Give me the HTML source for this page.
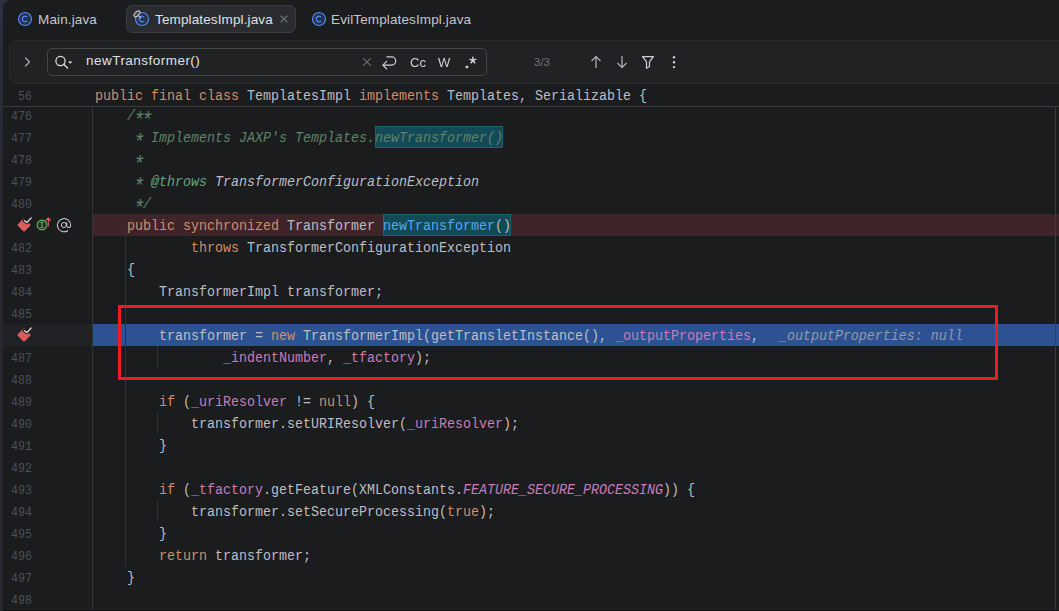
<!DOCTYPE html>
<html><head><meta charset="utf-8">
<style>
*{margin:0;padding:0;box-sizing:border-box}
html,body{width:1059px;height:611px;overflow:hidden;background:#1b1c1e}
body{position:relative;font-family:"Liberation Sans",sans-serif}
.abs{position:absolute}
svg{position:absolute;overflow:visible}
.tabtxt{position:absolute;top:11px;font-size:13.5px;line-height:18px;letter-spacing:0.13px;color:#c3c5cb;white-space:nowrap}
#activetab{position:absolute;left:126px;top:5px;width:170px;height:28px;border:1px solid #3a3c41;border-radius:6px;background:#2b2c30}
#searchpanel{position:absolute;left:9px;top:40px;width:1060px;height:44px;background:#212224;border:1px solid #2b2c2f;border-radius:8px 0 0 8px}
#input{position:absolute;left:47px;top:48px;width:440px;height:28px;border:1px solid #43454a;border-radius:5px}
.stxt{position:absolute;font-size:13.5px;line-height:18px;color:#dfe1e5;white-space:nowrap}
.wide{letter-spacing:0.47px}
.ln{position:absolute;left:0;width:32px;padding-top:2px;text-align:right;font-family:"Liberation Mono",monospace;font-size:12px;line-height:22px;color:#4b5059;transform:scale(0.97,1.12);transform-origin:100% 16px}
.cl{position:absolute;left:95px;padding-top:2px;font-family:"Liberation Mono",monospace;font-size:13.333px;color:#bcbec4;white-space:pre;line-height:22px;height:22px;transform:scaleY(1.1);transform-origin:0 16px}
.kw{color:#cf8e6d}
.fld{color:#c77dbb}
.sfld{color:#c77dbb;font-style:italic}
.mth{color:#56a8f5}
.doc{color:#5f826b;font-style:italic}
.dtag{color:#67a37c;font-style:italic}
.dref{color:#bcbec4;font-style:italic}
.ast{display:inline-block;transform:translate(-0.3px,5.2px) scale(1.45)}
.hint{color:#939aa8;font-style:italic;margin-left:20px}
.hl{position:absolute;height:22px;background:#124a57;border:1px solid #1b6272}
</style></head><body>
<!-- line backgrounds -->
<div class="abs" style="left:93px;top:214px;width:966px;height:22px;background:#3f2529"></div>
<div class="abs" style="left:3px;top:324px;width:89px;height:22px;background:#212225"></div>
<div class="abs" style="left:93px;top:324px;width:966px;height:22px;background:#2d5293"></div>
<!-- search highlights -->
<div class="hl" style="left:375px;top:126px;width:128px"></div>
<div class="hl" style="left:383px;top:214px;width:128px"></div>
<!-- guides -->
<div class="abs" style="left:92px;top:107px;width:1px;height:504px;background:#313438"></div>
<div class="abs" style="left:125px;top:236px;width:1px;height:330px;background:#2e3034"></div>
<div class="abs" style="left:157px;top:346px;width:1px;height:22px;background:#2e3034"></div>
<div class="abs" style="left:157px;top:412px;width:1px;height:22px;background:#2e3034"></div>
<div class="abs" style="left:157px;top:500px;width:1px;height:22px;background:#2e3034"></div>
<div class="abs" style="left:1055px;top:107px;width:1px;height:504px;background:#393b40"></div>
<div class="ln" style="top:104px">476</div>
<div class="cl" style="top:104px">    <span class="doc">/<span class="ast">*</span><span class="ast">*</span></span></div>
<div class="ln" style="top:126px">477</div>
<div class="cl" style="top:126px">    <span class="doc"> <span class="ast">*</span> Implements JAXP's Templates.newTransformer()</span></div>
<div class="ln" style="top:148px">478</div>
<div class="cl" style="top:148px">    <span class="doc"> <span class="ast">*</span></span></div>
<div class="ln" style="top:170px">479</div>
<div class="cl" style="top:170px">    <span class="doc"> <span class="ast">*</span> </span><span class="dtag">@throws</span><span class="doc"> </span><span class="dref">TransformerConfigurationException</span></div>
<div class="ln" style="top:192px">480</div>
<div class="cl" style="top:192px">    <span class="doc"> <span class="ast">*</span>/</span></div>
<div class="cl" style="top:214px">    <span class="kw">public synchronized</span> Transformer <span class="mth">newTransformer</span>()</div>
<div class="ln" style="top:236px">482</div>
<div class="cl" style="top:236px">            <span class="kw">throws</span> TransformerConfigurationException</div>
<div class="ln" style="top:258px">483</div>
<div class="cl" style="top:258px">    {</div>
<div class="ln" style="top:280px">484</div>
<div class="cl" style="top:280px">        TransformerImpl transformer;</div>
<div class="ln" style="top:302px">485</div>
<div class="cl" style="top:302px"></div>
<div class="cl" style="top:324px">        transformer = <span class="kw">new</span> TransformerImpl(getTransletInstance(), <span class="fld">_outputProperties</span>,<span class="hint">_outputProperties: null</span></div>
<div class="ln" style="top:346px">487</div>
<div class="cl" style="top:346px">                <span class="fld">_indentNumber</span>, <span class="fld">_tfactory</span>);</div>
<div class="ln" style="top:368px">488</div>
<div class="cl" style="top:368px"></div>
<div class="ln" style="top:390px">489</div>
<div class="cl" style="top:390px">        <span class="kw">if</span> (<span class="fld">_uriResolver</span> != <span class="kw">null</span>) {</div>
<div class="ln" style="top:412px">490</div>
<div class="cl" style="top:412px">            transformer.setURIResolver(<span class="fld">_uriResolver</span>);</div>
<div class="ln" style="top:434px">491</div>
<div class="cl" style="top:434px">        }</div>
<div class="ln" style="top:456px">492</div>
<div class="cl" style="top:456px"></div>
<div class="ln" style="top:478px">493</div>
<div class="cl" style="top:478px">        <span class="kw">if</span> (<span class="fld">_tfactory</span>.getFeature(XMLConstants.<span class="sfld">FEATURE_SECURE_PROCESSING</span>)) {</div>
<div class="ln" style="top:500px">494</div>
<div class="cl" style="top:500px">            transformer.setSecureProcessing(<span class="kw">true</span>);</div>
<div class="ln" style="top:522px">495</div>
<div class="cl" style="top:522px">        }</div>
<div class="ln" style="top:544px">496</div>
<div class="cl" style="top:544px">        <span class="kw">return</span> transformer;</div>
<div class="ln" style="top:566px">497</div>
<div class="cl" style="top:566px">    }</div>
<div class="ln" style="top:588px">498</div>
<div class="cl" style="top:588px"></div>
<!-- gutter icons -->
<svg style="left:24px;top:225px" width="1" height="1"><path d="M-6.2 -0.8 Q-7 0 -6.2 0.8 L-0.8 6.2 Q0 7 0.8 6.2 L6.2 0.8 Q7 0 6.2 -0.8 L0.8 -6.2 Q0 -7 -0.8 -6.2 Z" fill="#db5c5c"/>
      <path d="M0.3 -4.6 L2.8 -2.5 L7.4 -7.2" fill="none" stroke="#1b1c1e" stroke-width="3.4" stroke-linecap="round" stroke-linejoin="round"/>
      <path d="M0.5 -4.3 L2.8 -2.4 L7.1 -7" fill="none" stroke="#dfe1e5" stroke-width="1.3" stroke-linecap="round" stroke-linejoin="round"/></svg>
<svg style="left:24px;top:335px" width="1" height="1"><path d="M-6.2 -0.8 Q-7 0 -6.2 0.8 L-0.8 6.2 Q0 7 0.8 6.2 L6.2 0.8 Q7 0 6.2 -0.8 L0.8 -6.2 Q0 -7 -0.8 -6.2 Z" fill="#db5c5c"/>
      <path d="M0.3 -4.6 L2.8 -2.5 L7.4 -7.2" fill="none" stroke="#1b1c1e" stroke-width="3.4" stroke-linecap="round" stroke-linejoin="round"/>
      <path d="M0.5 -4.3 L2.8 -2.4 L7.1 -7" fill="none" stroke="#dfe1e5" stroke-width="1.3" stroke-linecap="round" stroke-linejoin="round"/></svg>
<svg style="left:42px;top:225px" width="1" height="1">
  <circle cx="0" cy="0" r="4.9" fill="#253627" stroke="#5fb865" stroke-width="1.1"/>
  <path d="M-1.6 -2.6 H1.6 M0 -2.6 V2.6 M-1.6 2.6 H1.6" stroke="#5fb865" stroke-width="0.9" fill="none"/>
  <path d="M6.3 0.8 V-7 M4.1 -4.7 L6.3 -7 L8.5 -4.7" stroke="#e55e5e" stroke-width="1.15" fill="none" stroke-linecap="round" stroke-linejoin="round"/>
</svg>
<svg style="left:64px;top:225px" width="1" height="1">
  <path d="M3.6 5.7 A6.6 6.6 0 1 1 6.6 0.4 C6.6 2.3 5.4 2.7 4.3 2.5 C3.1 2.3 2.7 1.4 2.7 0 V-2.6" fill="none" stroke="#ced0d6" stroke-width="1.05" stroke-linecap="round"/>
  <circle cx="-0.1" cy="0" r="2.5" fill="none" stroke="#ced0d6" stroke-width="1"/>
</svg>

<!-- sticky line -->
<div class="abs" style="left:0;top:84px;width:1059px;height:22px;background:#1b1c1e"></div>
<div class="abs" style="left:0;top:106px;width:1059px;height:1px;background:#393b40"></div>
<div class="ln" style="top:84px">56</div>
<div class="cl" style="top:84px"><span class="kw">public final class</span> TemplatesImpl <span class="kw">implements</span> Templates, Serializable {</div>

<!-- tabs -->
<div class="abs" style="left:0;top:0;width:1059px;height:40px;background:#1b1c1e"></div>
<div id="activetab"></div>
<svg style="left:25px;top:19px" width="1" height="1"><circle cx="0" cy="0" r="6.5" fill="#25324d" stroke="#548af7" stroke-width="1.15"/>
      <path d="M2.2 -1.8 A2.8 2.8 0 1 0 2.2 1.8" fill="none" stroke="#548af7" stroke-width="1.15"/></svg>
<svg style="left:142px;top:19px" width="1" height="1"><circle cx="0" cy="0" r="6.5" fill="#25324d" stroke="#548af7" stroke-width="1.15"/>
      <path d="M2.2 -1.8 A2.8 2.8 0 1 0 2.2 1.8" fill="none" stroke="#548af7" stroke-width="1.15"/>
  <path d="M-3.2 -3 L-1.2 -1" stroke="#b9bbc0" stroke-width="1.1" stroke-linecap="round"/>
  <ellipse cx="-5" cy="-5.2" rx="3.7" ry="2" transform="rotate(-45 -5 -5.2)" fill="#46484c" stroke="#d6d8dc" stroke-width="1"/>
</svg>
<svg style="left:319px;top:19px" width="1" height="1"><circle cx="0" cy="0" r="6.5" fill="#25324d" stroke="#548af7" stroke-width="1.15"/>
      <path d="M2.2 -1.8 A2.8 2.8 0 1 0 2.2 1.8" fill="none" stroke="#548af7" stroke-width="1.15"/></svg>
<span class="tabtxt" style="left:38px">Main.java</span>
<span class="tabtxt" style="left:155px;color:#dfe1e5">TemplatesImpl.java</span>
<span class="tabtxt" style="left:331px">EvilTemplatesImpl.java</span>
<svg style="left:284px;top:19px" width="1" height="1"><path d="M-3.4 -3.4 L3.4 3.4 M3.4 -3.4 L-3.4 3.4" stroke="#74777d" stroke-width="1.05"/></svg>

<!-- search bar -->
<div id="searchpanel"></div>
<div id="input"></div>
<svg style="left:0;top:0" width="1" height="1">
  <path d="M25.5 58 L29.5 62 L25.5 66" fill="none" stroke="#a8abb0" stroke-width="1.2" stroke-linecap="round" stroke-linejoin="round"/>
  <circle cx="60.5" cy="61" r="4.6" fill="none" stroke="#dfe1e5" stroke-width="1.2"/>
  <path d="M63.8 64.3 L67.5 68" stroke="#dfe1e5" stroke-width="1.3" stroke-linecap="round"/>
  <path d="M68 61.5 H72.4 L70.2 63.8 Z" fill="#dfe1e5"/>
  <path d="M363.3 58.3 L370.7 65.7 M370.7 58.3 L363.3 65.7" stroke="#6f737a" stroke-width="1.1"/>
  <path d="M386.4 56.9 H391.6 A4.1 4.1 0 0 1 391.6 65.1 H383.6" fill="none" stroke="#ced0d6" stroke-width="1.25"/>
  <path d="M386.6 61.4 L382.9 65.1 L386.6 68.8" fill="none" stroke="#ced0d6" stroke-width="1.25" stroke-linecap="round" stroke-linejoin="round"/>
  <path d="M596 56.5 V68 M591.5 61 L596 56.5 L600.5 61" fill="none" stroke="#a9acb2" stroke-width="1.3" stroke-linejoin="round"/>
  <path d="M622 56 V67.5 M617.5 63 L622 67.5 L626.5 63" fill="none" stroke="#a9acb2" stroke-width="1.3" stroke-linejoin="round"/>
  <path d="M642.6 56.6 H653.4 L649.5 61.8 V66.5 L646.5 68.2 V61.8 Z" fill="none" stroke="#ced0d6" stroke-width="1.2" stroke-linejoin="round"/>
  <circle cx="674" cy="57.3" r="1.2" fill="#ced0d6"/>
  <circle cx="674" cy="62.2" r="1.2" fill="#ced0d6"/>
  <circle cx="674" cy="67.1" r="1.2" fill="#ced0d6"/>
</svg>
<div class="stxt wide" style="left:86px;top:52px">newTransformer()</div>
<div class="stxt" style="left:410px;top:54px;font-size:13px;color:#ced0d6;will-change:transform">Cc</div>
<div class="stxt" style="left:438px;top:54px;font-size:13px;color:#ced0d6;will-change:transform">W</div>
<svg style="left:0;top:0" width="1" height="1">
  <rect x="465.7" y="65.7" width="2.5" height="2.5" rx="0.6" fill="#ced0d6"/>
  <path d="M472.9 60.3 V57.2 M472.9 60.3 L470 59.4 M472.9 60.3 L475.8 59.4 M472.9 60.3 L471.1 62.8 M472.9 60.3 L474.7 62.8" stroke="#ced0d6" stroke-width="1.5" stroke-linecap="round"/>
</svg>
<div class="stxt" style="left:534px;top:55px;font-size:11.5px;line-height:14px;color:#6f737a">3/3</div>

<!-- red box -->
<div class="abs" style="left:118px;top:305px;width:880px;height:75px;border:3px solid #ed1c24"></div>

<!-- left strip -->
<div class="abs" style="left:0;top:609px;width:1059px;height:1px;background:#232427"></div>
<div class="abs" style="left:0;top:610px;width:1059px;height:1px;background:#0c0c0d"></div>
<div class="abs" style="left:0;top:0;width:3px;height:611px;background:linear-gradient(#2b3142 0px,#282c36 100px,#26282d 200px,#26282d 611px)"></div>
<div class="abs" style="left:0;top:0;width:11px;height:8px;background:#2b3142;overflow:hidden"><div class="abs" style="left:3px;top:0;width:16px;height:16px;border-radius:8px;background:#1b1c1e"></div></div>
</body></html>
